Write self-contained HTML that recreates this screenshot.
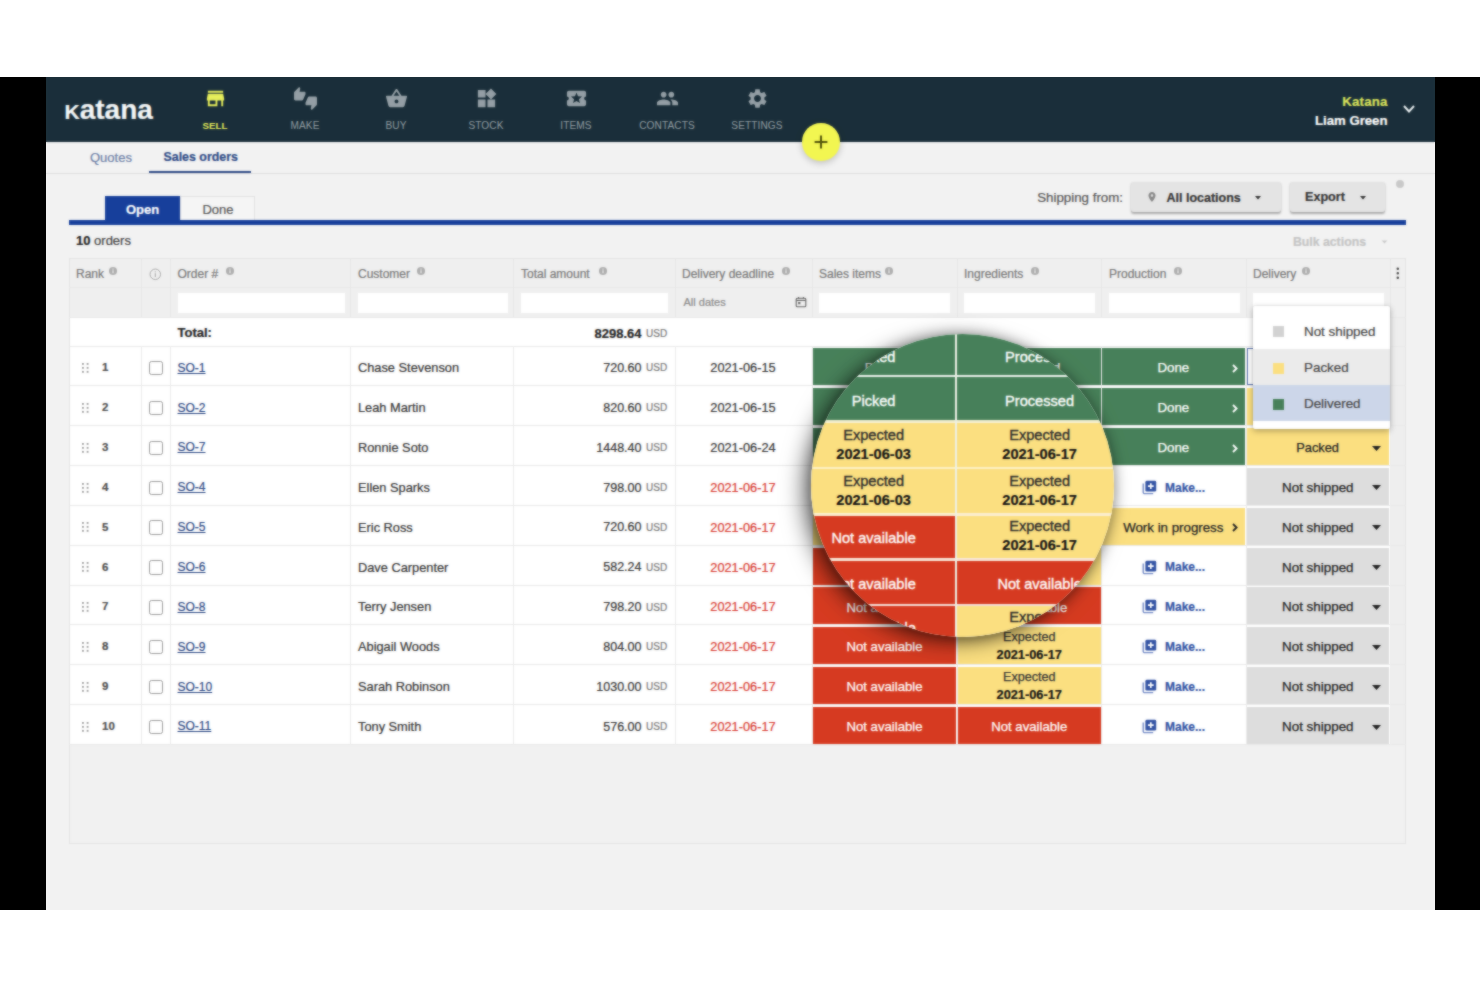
<!DOCTYPE html>
<html lang="en"><head><meta charset="utf-8"><title>Katana - Sales orders</title>
<style>
*{box-sizing:border-box;margin:0;padding:0}
html,body{width:1480px;height:987px;overflow:hidden;background:#fff}
body{font-family:"Liberation Sans",sans-serif;font-size:13px;color:#333;position:relative}
.abs{position:absolute}
#black{position:absolute;left:0;top:77px;width:1480px;height:833px;background:#000}
#app{position:absolute;left:46px;top:77px;width:1389px;height:833px;background:#f2f2f2;overflow:hidden}
#in{position:absolute;left:-46px;top:-77px;width:1480px;height:987px}
#nav{position:absolute;left:46px;top:77px;width:1389px;height:65px;background:#1b2f3a}
.t{position:absolute;white-space:nowrap;line-height:1;-webkit-text-stroke-width:0.2px}
.navlbl{position:absolute;top:119.5px;font-size:10.1px;color:#949fa5;text-align:center;width:80px;line-height:12px;letter-spacing:0.1px}
.navico{position:absolute;top:88px;width:22px;height:22px}
.hl{position:absolute;height:1px;background:#e9e9e9}
.vl{position:absolute;width:1px;background:#ebebeb}
</style></head>
<body>
<div id="black"></div><div id="app"><div id="in">
<div id="nav"></div>
<div class="t" id="logo" style="left:64.5px;top:93.4px;font-size:28px;line-height:32px;color:#f4f7f8;font-weight:bold;letter-spacing:0px"><span style="font-variant:small-caps;font-size:1.06em">k</span>atana</div>
<div class="navlbl" style="left:175px;color:#e6ee5b;font-weight:bold;font-size:9.6px">SELL</div>
<div class="navlbl" style="left:265px;color:#949fa5;font-weight:normal">MAKE</div>
<div class="navlbl" style="left:356px;color:#949fa5;font-weight:normal">BUY</div>
<div class="navlbl" style="left:446px;color:#949fa5;font-weight:normal">STOCK</div>
<div class="navlbl" style="left:536px;color:#949fa5;font-weight:normal">ITEMS</div>
<div class="navlbl" style="left:627px;color:#949fa5;font-weight:normal">CONTACTS</div>
<div class="navlbl" style="left:717px;color:#949fa5;font-weight:normal">SETTINGS</div>
<div class="t" style="top:93.6px;font-size:13.2px;line-height:15.8px;color:#dde55c;font-weight:bold;letter-spacing:0.2px;right:92.5px;">Katana</div>
<div class="t" style="top:112.6px;font-size:13.2px;line-height:15.8px;color:#fff;font-weight:bold;right:92.5px;">Liam Green</div>
<svg class="abs" style="left:1402px;top:104.3px" width="14" height="10" viewBox="0 0 14 10"><path d="M2 2 L7 7.5 L12 2" fill="none" stroke="#e8eef0" stroke-width="2"/></svg>
<svg class="abs" style="left:203.8px;top:86.9px" width="23" height="23" viewBox="0 0 24 24"><path d="M20 4H4v2h16V4zm1 10v-2l-1-5H4l-1 5v2h1v6h10v-6h4v6h2v-6h1zm-9 4H6v-4h6v4z" fill="#e6ee5b"/></svg>
<svg class="abs" style="left:293.8px;top:86.9px" width="23" height="23" viewBox="0 0 24 24"><path d="M12 6c0-.55-.45-1-1-1H5.82l.66-3.18.02-.23c0-.31-.13-.59-.33-.8L5.38 0 .44 4.94C.17 5.21 0 5.59 0 6v6.5c0 .83.67 1.5 1.5 1.5h6.75c.62 0 1.15-.38 1.38-.91l2.26-5.29c.07-.17.11-.36.11-.55V6zm10.5 4h-6.75c-.62 0-1.15.38-1.38.91l-2.26 5.29c-.07.17-.11.36-.11.55V18c0 .55.45 1 1 1h5.18l-.66 3.18-.02.24c0 .31.13.59.33.8l.79.78 4.94-4.94c.27-.27.44-.65.44-1.06v-6.5c0-.83-.67-1.5-1.5-1.5z" fill="#949fa5"/></svg>
<svg class="abs" style="left:384.8px;top:86.9px" width="23" height="23" viewBox="0 0 24 24"><path d="M17.21 9l-4.38-6.56c-.19-.28-.51-.42-.83-.42-.32 0-.64.14-.83.43L6.79 9H2c-.55 0-1 .45-1 1 0 .09.01.18.04.27l2.54 9.27c.23.84 1 1.46 1.92 1.46h13c.92 0 1.69-.62 1.93-1.46l2.54-9.27L23 10c0-.55-.45-1-1-1h-4.79zM9 9l3-4.4L15 9H9zm3 8c-1.1 0-2-.9-2-2s.9-2 2-2 2 .9 2 2-.9 2-2 2z" fill="#949fa5"/></svg>
<svg class="abs" style="left:474.8px;top:86.9px" width="23" height="23" viewBox="0 0 24 24"><path d="M13 13v8h8v-8h-8zM3 21h8v-8H3v8zM3 3v8h8V3H3zm13.66-1.31L11 7.34 16.66 13l5.66-5.66-5.66-5.65z" fill="#949fa5"/></svg>
<svg class="abs" style="left:564.8px;top:86.9px" width="23" height="23" viewBox="0 0 24 24"><path d="M20 12c0-1.1.9-2 2-2V6c0-1.1-.9-2-2-2H4c-1.1 0-1.99.9-1.99 2v4c1.1 0 1.99.9 1.99 2s-.89 2-2 2v4c0 1.1.9 2 2 2h16c1.1 0 2-.9 2-2v-4c-1.1 0-2-.9-2-2zm-4.42 4.8L12 14.5l-3.58 2.3 1.08-4.12-3.29-2.69 4.24-.25L12 5.8l1.54 3.95 4.24.25-3.29 2.69 1.09 4.11z" fill="#949fa5"/></svg>
<svg class="abs" style="left:655.8px;top:86.9px" width="23" height="23" viewBox="0 0 24 24"><path d="M16 11c1.66 0 2.99-1.34 2.99-3S17.66 5 16 5c-1.66 0-3 1.34-3 3s1.34 3 3 3zm-8 0c1.66 0 2.99-1.34 2.99-3S9.66 5 8 5C6.34 5 5 6.34 5 8s1.34 3 3 3zm0 2c-2.33 0-7 1.17-7 3.5V19h14v-2.5c0-2.33-4.67-3.5-7-3.5zm8 0c-.29 0-.62.02-.97.05 1.16.84 1.97 1.97 1.97 3.45V19h6v-2.5c0-2.33-4.67-3.5-7-3.5z" fill="#949fa5"/></svg>
<svg class="abs" style="left:745.8px;top:86.9px" width="23" height="23" viewBox="0 0 24 24"><path d="M19.14 12.94c.04-.3.06-.61.06-.94 0-.32-.02-.64-.07-.94l2.03-1.58c.18-.14.23-.41.12-.61l-1.92-3.32c-.12-.22-.37-.29-.59-.22l-2.39.96c-.5-.38-1.03-.7-1.62-.94l-.36-2.54c-.04-.24-.24-.41-.48-.41h-3.84c-.24 0-.43.17-.47.41l-.36 2.54c-.59.24-1.13.57-1.62.94l-2.39-.96c-.22-.08-.47 0-.59.22L2.74 8.87c-.12.21-.08.47.12.61l2.03 1.58c-.05.3-.09.63-.09.94s.02.64.07.94l-2.03 1.58c-.18.14-.23.41-.12.61l1.92 3.32c.12.22.37.29.59.22l2.39-.96c.5.38 1.03.7 1.62.94l.36 2.54c.05.24.24.41.48.41h3.84c.24 0 .44-.17.47-.41l.36-2.54c.59-.24 1.13-.56 1.62-.94l2.39.96c.22.08.47 0 .59-.22l1.92-3.32c.12-.22.07-.47-.12-.61l-2.01-1.58zM12 15.6c-1.98 0-3.6-1.62-3.6-3.6s1.62-3.6 3.6-3.6 3.6 1.62 3.6 3.6-1.62 3.6-3.6 3.6z" fill="#949fa5"/></svg>
<div class="hl" style="left:46px;top:173px;width:1389px;background:#dedede"></div>
<div class="t" style="top:149.7px;font-size:13px;line-height:15.6px;color:#6d7fa6;left:90px;">Quotes</div>
<div class="t" style="top:150.1px;font-size:12.4px;line-height:14.9px;color:#2d4a86;font-weight:bold;left:163.5px;">Sales orders</div>
<div class="abs" style="left:149px;top:171.3px;width:102px;height:1.7px;background:#2d4a86"></div>
<div class="abs" style="left:802.3px;top:123.2px;width:37.4px;height:37.4px;border-radius:50%;background:#f2f652;box-shadow:0 2px 7px rgba(0,0,0,.22)"></div>
<svg class="abs" style="left:813px;top:134px" width="16" height="16" viewBox="0 0 16 16"><path d="M8 1.600v12.800M1.600 8h12.800" stroke="#4f5008" stroke-width="2" fill="none"/></svg>
<div class="abs" style="left:180px;top:196px;width:75px;height:24px;background:#f5f5f5;border:1px solid #e2e2e2;border-bottom:none"></div>
<div class="abs" style="left:105px;top:195.5px;width:75px;height:25px;background:#17409b"></div>
<div class="abs" style="left:69px;top:219.7px;width:1337px;height:5.4px;background:#17409b"></div>
<div class="t" style="top:201.9px;font-size:13px;line-height:15.6px;color:#fff;font-weight:bold;left:-57.5px;width:400px;text-align:center;">Open</div>
<div class="t" style="top:201.9px;font-size:13px;line-height:15.6px;color:#555;left:18px;width:400px;text-align:center;">Done</div>
<div class="t" style="top:189.5px;font-size:13.3px;line-height:16.0px;color:#555;right:357px;">Shipping from:</div>
<div class="abs" style="left:1131px;top:182px;width:150px;height:30px;background:#e4e4e4;border-radius:3px;box-shadow:0 1.5px 2px rgba(0,0,0,.3)"></div>
<div class="t" style="top:190.5px;font-size:12.5px;line-height:15.0px;color:#333;font-weight:bold;left:1166.5px;">All locations</div>
<div class="abs" style="left:1290px;top:182px;width:95px;height:30px;background:#e4e4e4;border-radius:3px;box-shadow:0 1.5px 2px rgba(0,0,0,.3)"></div>
<div class="t" style="top:190.4px;font-size:12.6px;line-height:15.1px;color:#333;font-weight:bold;left:1305px;">Export</div>
<svg class="abs" style="left:1146px;top:191px" width="12" height="12" viewBox="0 0 24 24"><path d="M12 2C8.13 2 5 5.13 5 9c0 5.25 7 13 7 13s7-7.75 7-13c0-3.87-3.13-7-7-7zm0 9.500c-1.38 0-2.5-1.12-2.5-2.5s1.120-2.5 2.5-2.5 2.5 1.120 2.5 2.5-1.120 2.500-2.5 2.500z" fill="#888"/></svg>
<svg class="abs" style="left:1255px;top:196.3px" width="6" height="3.5" viewBox="0 0 7 4"><path d="M0 0h7L3.5 4z" fill="#333"/></svg>
<svg class="abs" style="left:1359.5px;top:196.3px" width="6" height="3.5" viewBox="0 0 7 4"><path d="M0 0h7L3.5 4z" fill="#333"/></svg>
<div class="abs" style="left:1396px;top:180px;width:8px;height:8px;border-radius:50%;background:#c9c9c9"></div>
<div class="t" style="top:233.2px;font-size:13px;line-height:15.6px;color:#444;left:76px;"><b style="color:#222">10</b> orders</div>
<div class="t" style="top:234.6px;font-size:12.3px;line-height:14.8px;color:#c4c4c4;font-weight:bold;right:114px;">Bulk actions</div>
<svg class="abs" style="left:1380.5px;top:239.5px" width="7" height="4" viewBox="0 0 8 5"><path d="M0.5 0.5h7L4 4.5z" fill="#c9c9c9"/></svg>
<div class="abs" style="left:69px;top:258.4px;width:1336.9px;height:585.2px;border:1px solid #e3e3e3;background:#f1f1f1"></div>
<div class="abs" style="left:70px;top:259.4px;width:1334.9px;height:57.60000000000002px;background:#efefef"></div>
<div class="abs" style="left:70px;top:317px;width:1334.9px;height:427.5px;background:#fff"></div>
<div class="abs" style="left:1390px;top:317px;width:15px;height:427.5px;background:#eeeeee"></div>
<div class="hl" style="left:69px;top:287.3px;width:1336.9px"></div>
<div class="hl" style="left:69px;top:316.5px;width:1336.9px"></div>
<div class="hl" style="left:69px;top:345.5px;width:1336.9px"></div>
<div class="hl" style="left:69px;top:385.35px;width:1336.9px"></div>
<div class="hl" style="left:69px;top:425.2px;width:1336.9px"></div>
<div class="hl" style="left:69px;top:465.05px;width:1336.9px"></div>
<div class="hl" style="left:69px;top:504.9px;width:1336.9px"></div>
<div class="hl" style="left:69px;top:544.75px;width:1336.9px"></div>
<div class="hl" style="left:69px;top:584.6px;width:1336.9px"></div>
<div class="hl" style="left:69px;top:624.45px;width:1336.9px"></div>
<div class="hl" style="left:69px;top:664.3px;width:1336.9px"></div>
<div class="hl" style="left:69px;top:704.1500000000001px;width:1336.9px"></div>
<div class="hl" style="left:69px;top:744.0px;width:1336.9px"></div>
<div class="vl" style="left:140.5px;top:258.4px;height:58.60000000000002px;background:#e6e6e6"></div>
<div class="vl" style="left:140.5px;top:346px;height:398.5px"></div>
<div class="vl" style="left:169.5px;top:258.4px;height:58.60000000000002px;background:#e6e6e6"></div>
<div class="vl" style="left:169.5px;top:346px;height:398.5px"></div>
<div class="vl" style="left:349.5px;top:258.4px;height:58.60000000000002px;background:#e6e6e6"></div>
<div class="vl" style="left:349.5px;top:346px;height:398.5px"></div>
<div class="vl" style="left:512.5px;top:258.4px;height:58.60000000000002px;background:#e6e6e6"></div>
<div class="vl" style="left:512.5px;top:346px;height:398.5px"></div>
<div class="vl" style="left:674.5px;top:258.4px;height:58.60000000000002px;background:#e6e6e6"></div>
<div class="vl" style="left:674.5px;top:346px;height:398.5px"></div>
<div class="vl" style="left:811.5px;top:258.4px;height:58.60000000000002px;background:#e6e6e6"></div>
<div class="vl" style="left:811.5px;top:346px;height:398.5px"></div>
<div class="vl" style="left:956.5px;top:258.4px;height:58.60000000000002px;background:#e6e6e6"></div>
<div class="vl" style="left:956.5px;top:346px;height:398.5px"></div>
<div class="vl" style="left:1101.0px;top:258.4px;height:58.60000000000002px;background:#e6e6e6"></div>
<div class="vl" style="left:1101.0px;top:346px;height:398.5px"></div>
<div class="vl" style="left:1245.5px;top:258.4px;height:58.60000000000002px;background:#e6e6e6"></div>
<div class="vl" style="left:1245.5px;top:346px;height:398.5px"></div>
<div class="vl" style="left:1389.5px;top:258.4px;height:58.60000000000002px;background:#e6e6e6"></div>
<div class="vl" style="left:1389.5px;top:346px;height:398.5px"></div>
<div class="t" style="top:267.1px;font-size:12px;line-height:14.4px;color:#787878;left:76px;">Rank</div>
<svg class="abs" style="left:108.5px;top:267px" width="8" height="8" viewBox="0 0 8 8"><circle cx="4" cy="4" r="4" fill="#adadad"/><rect x="3.4" y="3.3" width="1.2" height="2.9" fill="#efefef"/><rect x="3.4" y="1.6" width="1.2" height="1.1" fill="#efefef"/></svg>
<div class="t" style="top:267.1px;font-size:12px;line-height:14.4px;color:#787878;left:177.5px;">Order #</div>
<svg class="abs" style="left:225.5px;top:267px" width="8" height="8" viewBox="0 0 8 8"><circle cx="4" cy="4" r="4" fill="#adadad"/><rect x="3.4" y="3.3" width="1.2" height="2.9" fill="#efefef"/><rect x="3.4" y="1.6" width="1.2" height="1.1" fill="#efefef"/></svg>
<div class="t" style="top:267.1px;font-size:12px;line-height:14.4px;color:#787878;left:358px;">Customer</div>
<svg class="abs" style="left:417px;top:267px" width="8" height="8" viewBox="0 0 8 8"><circle cx="4" cy="4" r="4" fill="#adadad"/><rect x="3.4" y="3.3" width="1.2" height="2.9" fill="#efefef"/><rect x="3.4" y="1.6" width="1.2" height="1.1" fill="#efefef"/></svg>
<div class="t" style="top:267.1px;font-size:12px;line-height:14.4px;color:#787878;left:521px;">Total amount</div>
<svg class="abs" style="left:599px;top:267px" width="8" height="8" viewBox="0 0 8 8"><circle cx="4" cy="4" r="4" fill="#adadad"/><rect x="3.4" y="3.3" width="1.2" height="2.9" fill="#efefef"/><rect x="3.4" y="1.6" width="1.2" height="1.1" fill="#efefef"/></svg>
<div class="t" style="top:267.1px;font-size:12px;line-height:14.4px;color:#787878;left:682px;">Delivery deadline</div>
<svg class="abs" style="left:781.5px;top:267px" width="8" height="8" viewBox="0 0 8 8"><circle cx="4" cy="4" r="4" fill="#adadad"/><rect x="3.4" y="3.3" width="1.2" height="2.9" fill="#efefef"/><rect x="3.4" y="1.6" width="1.2" height="1.1" fill="#efefef"/></svg>
<div class="t" style="top:267.1px;font-size:12px;line-height:14.4px;color:#787878;left:819px;">Sales items</div>
<svg class="abs" style="left:885px;top:267px" width="8" height="8" viewBox="0 0 8 8"><circle cx="4" cy="4" r="4" fill="#adadad"/><rect x="3.4" y="3.3" width="1.2" height="2.9" fill="#efefef"/><rect x="3.4" y="1.6" width="1.2" height="1.1" fill="#efefef"/></svg>
<div class="t" style="top:267.1px;font-size:12px;line-height:14.4px;color:#787878;left:964px;">Ingredients</div>
<svg class="abs" style="left:1030.5px;top:267px" width="8" height="8" viewBox="0 0 8 8"><circle cx="4" cy="4" r="4" fill="#adadad"/><rect x="3.4" y="3.3" width="1.2" height="2.9" fill="#efefef"/><rect x="3.4" y="1.6" width="1.2" height="1.1" fill="#efefef"/></svg>
<div class="t" style="top:267.1px;font-size:12px;line-height:14.4px;color:#787878;left:1109px;">Production</div>
<svg class="abs" style="left:1174px;top:267px" width="8" height="8" viewBox="0 0 8 8"><circle cx="4" cy="4" r="4" fill="#adadad"/><rect x="3.4" y="3.3" width="1.2" height="2.9" fill="#efefef"/><rect x="3.4" y="1.6" width="1.2" height="1.1" fill="#efefef"/></svg>
<div class="t" style="top:267.1px;font-size:12px;line-height:14.4px;color:#787878;left:1253px;">Delivery</div>
<svg class="abs" style="left:1302px;top:267px" width="8" height="8" viewBox="0 0 8 8"><circle cx="4" cy="4" r="4" fill="#adadad"/><rect x="3.4" y="3.3" width="1.2" height="2.9" fill="#efefef"/><rect x="3.4" y="1.6" width="1.2" height="1.1" fill="#efefef"/></svg>
<svg class="abs" style="left:149.3px;top:268.3px" width="12.600" height="12.600" viewBox="0 0 12 12"><circle cx="6" cy="6" r="5" fill="none" stroke="#a5a5a5" stroke-width="0.9"/><rect x="5.5" y="5" width="1" height="3.6" fill="#a5a5a5"/><rect x="5.5" y="3.2" width="1" height="1" fill="#a5a5a5"/></svg>
<svg class="abs" style="left:1395.5px;top:267px" width="3.6" height="12.6" viewBox="0 0 4 14"><circle cx="2" cy="2" r="1.4" fill="#444"/><circle cx="2" cy="7" r="1.4" fill="#444"/><circle cx="2" cy="12" r="1.4" fill="#444"/></svg>
<div class="abs" style="left:177.5px;top:293px;width:167.5px;height:19.5px;background:#fff"></div>
<div class="abs" style="left:358px;top:293px;width:150px;height:19.5px;background:#fff"></div>
<div class="abs" style="left:521px;top:293px;width:147px;height:19.5px;background:#fff"></div>
<div class="abs" style="left:819px;top:293px;width:131px;height:19.5px;background:#fff"></div>
<div class="abs" style="left:964px;top:293px;width:131px;height:19.5px;background:#fff"></div>
<div class="abs" style="left:1109px;top:293px;width:131px;height:19.5px;background:#fff"></div>
<div class="abs" style="left:1253px;top:293px;width:131px;height:19.5px;background:#fff"></div>
<div class="t" style="top:295.7px;font-size:11px;line-height:13.2px;color:#8a8a8a;left:683.5px;">All dates</div>
<svg class="abs" style="left:795px;top:296px" width="12" height="12" viewBox="0 0 12 12"><rect x="1.2" y="2.2" width="9.6" height="8.6" rx="1" fill="none" stroke="#666" stroke-width="1.1"/><path d="M1.2 4.4h9.6" stroke="#666" stroke-width="1.1"/><rect x="3.2" y="6" width="2.2" height="2.2" fill="#666"/><path d="M3.6 1v1.6M8.4 1v1.6" stroke="#666" stroke-width="1.1"/></svg>
<div class="t" style="top:325.4px;font-size:13px;line-height:15.6px;color:#222;font-weight:bold;left:177.5px;">Total:</div>
<div class="t" style="top:325.7px;font-size:13px;line-height:15.6px;color:#222;font-weight:bold;right:838.5px;">8298.64</div>
<div class="t" style="top:327.8px;font-size:10px;line-height:12.0px;color:#777;left:646px;">USD</div>
<svg class="abs" style="left:82px;top:362.9px" width="7" height="10" viewBox="0 0 6 8.6"><rect x="0" y="0" width="1.6" height="1.6" fill="#9b9b9b"/><rect x="0" y="3.4" width="1.6" height="1.6" fill="#9b9b9b"/><rect x="0" y="6.8" width="1.6" height="1.6" fill="#9b9b9b"/><rect x="4" y="0" width="1.6" height="1.6" fill="#9b9b9b"/><rect x="4" y="3.4" width="1.6" height="1.6" fill="#9b9b9b"/><rect x="4" y="6.8" width="1.6" height="1.6" fill="#9b9b9b"/></svg>
<div class="t" style="top:361.3px;font-size:11.5px;line-height:13.8px;color:#4d4d4d;font-weight:bold;left:102px;">1</div>
<div class="abs" style="left:148.5px;top:360.9px;width:14.5px;height:14.5px;border:1.5px solid #999;border-radius:2.5px;background:#fff"></div>
<div class="t" style="top:360.7px;font-size:12px;line-height:14.4px;color:#2a4682;left:177.5px;"><span style="text-decoration:underline">SO-1</span></div>
<div class="t" style="top:360.2px;font-size:12.8px;line-height:15.4px;color:#333;left:358px;">Chase Stevenson</div>
<div class="t" style="top:360.9px;font-size:12.5px;line-height:15.0px;color:#333;right:838.5px;">720.60</div>
<div class="t" style="top:362.4px;font-size:10px;line-height:12.0px;color:#777;left:646px;">USD</div>
<div class="t" style="top:360.2px;font-size:12.8px;line-height:15.4px;color:#333;left:543px;width:400px;text-align:center;">2021-06-15</div>
<svg class="abs" style="left:82px;top:402.8px" width="7" height="10" viewBox="0 0 6 8.6"><rect x="0" y="0" width="1.6" height="1.6" fill="#9b9b9b"/><rect x="0" y="3.4" width="1.6" height="1.6" fill="#9b9b9b"/><rect x="0" y="6.8" width="1.6" height="1.6" fill="#9b9b9b"/><rect x="4" y="0" width="1.6" height="1.6" fill="#9b9b9b"/><rect x="4" y="3.4" width="1.6" height="1.6" fill="#9b9b9b"/><rect x="4" y="6.8" width="1.6" height="1.6" fill="#9b9b9b"/></svg>
<div class="t" style="top:401.2px;font-size:11.5px;line-height:13.8px;color:#4d4d4d;font-weight:bold;left:102px;">2</div>
<div class="abs" style="left:148.5px;top:400.8px;width:14.5px;height:14.5px;border:1.5px solid #999;border-radius:2.5px;background:#fff"></div>
<div class="t" style="top:400.6px;font-size:12px;line-height:14.4px;color:#2a4682;left:177.5px;"><span style="text-decoration:underline">SO-2</span></div>
<div class="t" style="top:400.1px;font-size:12.8px;line-height:15.4px;color:#333;left:358px;">Leah Martin</div>
<div class="t" style="top:400.8px;font-size:12.5px;line-height:15.0px;color:#333;right:838.5px;">820.60</div>
<div class="t" style="top:402.3px;font-size:10px;line-height:12.0px;color:#777;left:646px;">USD</div>
<div class="t" style="top:400.1px;font-size:12.8px;line-height:15.4px;color:#333;left:543px;width:400px;text-align:center;">2021-06-15</div>
<svg class="abs" style="left:82px;top:442.6px" width="7" height="10" viewBox="0 0 6 8.6"><rect x="0" y="0" width="1.6" height="1.6" fill="#9b9b9b"/><rect x="0" y="3.4" width="1.6" height="1.6" fill="#9b9b9b"/><rect x="0" y="6.8" width="1.6" height="1.6" fill="#9b9b9b"/><rect x="4" y="0" width="1.6" height="1.6" fill="#9b9b9b"/><rect x="4" y="3.4" width="1.6" height="1.6" fill="#9b9b9b"/><rect x="4" y="6.8" width="1.6" height="1.6" fill="#9b9b9b"/></svg>
<div class="t" style="top:441.0px;font-size:11.5px;line-height:13.8px;color:#4d4d4d;font-weight:bold;left:102px;">3</div>
<div class="abs" style="left:148.5px;top:440.6px;width:14.5px;height:14.5px;border:1.5px solid #999;border-radius:2.5px;background:#fff"></div>
<div class="t" style="top:440.4px;font-size:12px;line-height:14.4px;color:#2a4682;left:177.5px;"><span style="text-decoration:underline">SO-7</span></div>
<div class="t" style="top:439.9px;font-size:12.8px;line-height:15.4px;color:#333;left:358px;">Ronnie Soto</div>
<div class="t" style="top:440.6px;font-size:12.5px;line-height:15.0px;color:#333;right:838.5px;">1448.40</div>
<div class="t" style="top:442.1px;font-size:10px;line-height:12.0px;color:#777;left:646px;">USD</div>
<div class="t" style="top:439.9px;font-size:12.8px;line-height:15.4px;color:#333;left:543px;width:400px;text-align:center;">2021-06-24</div>
<svg class="abs" style="left:82px;top:482.5px" width="7" height="10" viewBox="0 0 6 8.6"><rect x="0" y="0" width="1.6" height="1.6" fill="#9b9b9b"/><rect x="0" y="3.4" width="1.6" height="1.6" fill="#9b9b9b"/><rect x="0" y="6.8" width="1.6" height="1.6" fill="#9b9b9b"/><rect x="4" y="0" width="1.6" height="1.6" fill="#9b9b9b"/><rect x="4" y="3.4" width="1.6" height="1.6" fill="#9b9b9b"/><rect x="4" y="6.8" width="1.6" height="1.6" fill="#9b9b9b"/></svg>
<div class="t" style="top:480.9px;font-size:11.5px;line-height:13.8px;color:#4d4d4d;font-weight:bold;left:102px;">4</div>
<div class="abs" style="left:148.5px;top:480.5px;width:14.5px;height:14.5px;border:1.5px solid #999;border-radius:2.5px;background:#fff"></div>
<div class="t" style="top:480.3px;font-size:12px;line-height:14.4px;color:#2a4682;left:177.5px;"><span style="text-decoration:underline">SO-4</span></div>
<div class="t" style="top:479.8px;font-size:12.8px;line-height:15.4px;color:#333;left:358px;">Ellen Sparks</div>
<div class="t" style="top:480.5px;font-size:12.5px;line-height:15.0px;color:#333;right:838.5px;">798.00</div>
<div class="t" style="top:482.0px;font-size:10px;line-height:12.0px;color:#777;left:646px;">USD</div>
<div class="t" style="top:479.8px;font-size:12.8px;line-height:15.4px;color:#d8392f;left:543px;width:400px;text-align:center;">2021-06-17</div>
<svg class="abs" style="left:82px;top:522.3px" width="7" height="10" viewBox="0 0 6 8.6"><rect x="0" y="0" width="1.6" height="1.6" fill="#9b9b9b"/><rect x="0" y="3.4" width="1.6" height="1.6" fill="#9b9b9b"/><rect x="0" y="6.8" width="1.6" height="1.6" fill="#9b9b9b"/><rect x="4" y="0" width="1.6" height="1.6" fill="#9b9b9b"/><rect x="4" y="3.4" width="1.6" height="1.6" fill="#9b9b9b"/><rect x="4" y="6.8" width="1.6" height="1.6" fill="#9b9b9b"/></svg>
<div class="t" style="top:520.7px;font-size:11.5px;line-height:13.8px;color:#4d4d4d;font-weight:bold;left:102px;">5</div>
<div class="abs" style="left:148.5px;top:520.3px;width:14.5px;height:14.5px;border:1.5px solid #999;border-radius:2.5px;background:#fff"></div>
<div class="t" style="top:520.1px;font-size:12px;line-height:14.4px;color:#2a4682;left:177.5px;"><span style="text-decoration:underline">SO-5</span></div>
<div class="t" style="top:519.6px;font-size:12.8px;line-height:15.4px;color:#333;left:358px;">Eric Ross</div>
<div class="t" style="top:520.3px;font-size:12.5px;line-height:15.0px;color:#333;right:838.5px;">720.60</div>
<div class="t" style="top:521.8px;font-size:10px;line-height:12.0px;color:#777;left:646px;">USD</div>
<div class="t" style="top:519.6px;font-size:12.8px;line-height:15.4px;color:#d8392f;left:543px;width:400px;text-align:center;">2021-06-17</div>
<svg class="abs" style="left:82px;top:562.2px" width="7" height="10" viewBox="0 0 6 8.6"><rect x="0" y="0" width="1.6" height="1.6" fill="#9b9b9b"/><rect x="0" y="3.4" width="1.6" height="1.6" fill="#9b9b9b"/><rect x="0" y="6.8" width="1.6" height="1.6" fill="#9b9b9b"/><rect x="4" y="0" width="1.6" height="1.6" fill="#9b9b9b"/><rect x="4" y="3.4" width="1.6" height="1.6" fill="#9b9b9b"/><rect x="4" y="6.8" width="1.6" height="1.6" fill="#9b9b9b"/></svg>
<div class="t" style="top:560.6px;font-size:11.5px;line-height:13.8px;color:#4d4d4d;font-weight:bold;left:102px;">6</div>
<div class="abs" style="left:148.5px;top:560.2px;width:14.5px;height:14.5px;border:1.5px solid #999;border-radius:2.5px;background:#fff"></div>
<div class="t" style="top:560.0px;font-size:12px;line-height:14.4px;color:#2a4682;left:177.5px;"><span style="text-decoration:underline">SO-6</span></div>
<div class="t" style="top:559.5px;font-size:12.8px;line-height:15.4px;color:#333;left:358px;">Dave Carpenter</div>
<div class="t" style="top:560.2px;font-size:12.5px;line-height:15.0px;color:#333;right:838.5px;">582.24</div>
<div class="t" style="top:561.7px;font-size:10px;line-height:12.0px;color:#777;left:646px;">USD</div>
<div class="t" style="top:559.5px;font-size:12.8px;line-height:15.4px;color:#d8392f;left:543px;width:400px;text-align:center;">2021-06-17</div>
<svg class="abs" style="left:82px;top:602.0px" width="7" height="10" viewBox="0 0 6 8.6"><rect x="0" y="0" width="1.6" height="1.6" fill="#9b9b9b"/><rect x="0" y="3.4" width="1.6" height="1.6" fill="#9b9b9b"/><rect x="0" y="6.8" width="1.6" height="1.6" fill="#9b9b9b"/><rect x="4" y="0" width="1.6" height="1.6" fill="#9b9b9b"/><rect x="4" y="3.4" width="1.6" height="1.6" fill="#9b9b9b"/><rect x="4" y="6.8" width="1.6" height="1.6" fill="#9b9b9b"/></svg>
<div class="t" style="top:600.4px;font-size:11.5px;line-height:13.8px;color:#4d4d4d;font-weight:bold;left:102px;">7</div>
<div class="abs" style="left:148.5px;top:600.0px;width:14.5px;height:14.5px;border:1.5px solid #999;border-radius:2.5px;background:#fff"></div>
<div class="t" style="top:599.8px;font-size:12px;line-height:14.4px;color:#2a4682;left:177.5px;"><span style="text-decoration:underline">SO-8</span></div>
<div class="t" style="top:599.3px;font-size:12.8px;line-height:15.4px;color:#333;left:358px;">Terry Jensen</div>
<div class="t" style="top:600.0px;font-size:12.5px;line-height:15.0px;color:#333;right:838.5px;">798.20</div>
<div class="t" style="top:601.5px;font-size:10px;line-height:12.0px;color:#777;left:646px;">USD</div>
<div class="t" style="top:599.3px;font-size:12.8px;line-height:15.4px;color:#d8392f;left:543px;width:400px;text-align:center;">2021-06-17</div>
<svg class="abs" style="left:82px;top:641.9px" width="7" height="10" viewBox="0 0 6 8.6"><rect x="0" y="0" width="1.6" height="1.6" fill="#9b9b9b"/><rect x="0" y="3.4" width="1.6" height="1.6" fill="#9b9b9b"/><rect x="0" y="6.8" width="1.6" height="1.6" fill="#9b9b9b"/><rect x="4" y="0" width="1.6" height="1.6" fill="#9b9b9b"/><rect x="4" y="3.4" width="1.6" height="1.6" fill="#9b9b9b"/><rect x="4" y="6.8" width="1.6" height="1.6" fill="#9b9b9b"/></svg>
<div class="t" style="top:640.3px;font-size:11.5px;line-height:13.8px;color:#4d4d4d;font-weight:bold;left:102px;">8</div>
<div class="abs" style="left:148.5px;top:639.9px;width:14.5px;height:14.5px;border:1.5px solid #999;border-radius:2.5px;background:#fff"></div>
<div class="t" style="top:639.7px;font-size:12px;line-height:14.4px;color:#2a4682;left:177.5px;"><span style="text-decoration:underline">SO-9</span></div>
<div class="t" style="top:639.2px;font-size:12.8px;line-height:15.4px;color:#333;left:358px;">Abigail Woods</div>
<div class="t" style="top:639.9px;font-size:12.5px;line-height:15.0px;color:#333;right:838.5px;">804.00</div>
<div class="t" style="top:641.4px;font-size:10px;line-height:12.0px;color:#777;left:646px;">USD</div>
<div class="t" style="top:639.2px;font-size:12.8px;line-height:15.4px;color:#d8392f;left:543px;width:400px;text-align:center;">2021-06-17</div>
<svg class="abs" style="left:82px;top:681.7px" width="7" height="10" viewBox="0 0 6 8.6"><rect x="0" y="0" width="1.6" height="1.6" fill="#9b9b9b"/><rect x="0" y="3.4" width="1.6" height="1.6" fill="#9b9b9b"/><rect x="0" y="6.8" width="1.6" height="1.6" fill="#9b9b9b"/><rect x="4" y="0" width="1.6" height="1.6" fill="#9b9b9b"/><rect x="4" y="3.4" width="1.6" height="1.6" fill="#9b9b9b"/><rect x="4" y="6.8" width="1.6" height="1.6" fill="#9b9b9b"/></svg>
<div class="t" style="top:680.1px;font-size:11.5px;line-height:13.8px;color:#4d4d4d;font-weight:bold;left:102px;">9</div>
<div class="abs" style="left:148.5px;top:679.7px;width:14.5px;height:14.5px;border:1.5px solid #999;border-radius:2.5px;background:#fff"></div>
<div class="t" style="top:679.5px;font-size:12px;line-height:14.4px;color:#2a4682;left:177.5px;"><span style="text-decoration:underline">SO-10</span></div>
<div class="t" style="top:679.0px;font-size:12.8px;line-height:15.4px;color:#333;left:358px;">Sarah Robinson</div>
<div class="t" style="top:679.7px;font-size:12.5px;line-height:15.0px;color:#333;right:838.5px;">1030.00</div>
<div class="t" style="top:681.2px;font-size:10px;line-height:12.0px;color:#777;left:646px;">USD</div>
<div class="t" style="top:679.0px;font-size:12.8px;line-height:15.4px;color:#d8392f;left:543px;width:400px;text-align:center;">2021-06-17</div>
<svg class="abs" style="left:82px;top:721.6px" width="7" height="10" viewBox="0 0 6 8.6"><rect x="0" y="0" width="1.6" height="1.6" fill="#9b9b9b"/><rect x="0" y="3.4" width="1.6" height="1.6" fill="#9b9b9b"/><rect x="0" y="6.8" width="1.6" height="1.6" fill="#9b9b9b"/><rect x="4" y="0" width="1.6" height="1.6" fill="#9b9b9b"/><rect x="4" y="3.4" width="1.6" height="1.6" fill="#9b9b9b"/><rect x="4" y="6.8" width="1.6" height="1.6" fill="#9b9b9b"/></svg>
<div class="t" style="top:720.0px;font-size:11.5px;line-height:13.8px;color:#4d4d4d;font-weight:bold;left:102px;">10</div>
<div class="abs" style="left:148.5px;top:719.6px;width:14.5px;height:14.5px;border:1.5px solid #999;border-radius:2.5px;background:#fff"></div>
<div class="t" style="top:719.4px;font-size:12px;line-height:14.4px;color:#2a4682;left:177.5px;"><span style="text-decoration:underline">SO-11</span></div>
<div class="t" style="top:718.9px;font-size:12.8px;line-height:15.4px;color:#333;left:358px;">Tony Smith</div>
<div class="t" style="top:719.6px;font-size:12.5px;line-height:15.0px;color:#333;right:838.5px;">576.00</div>
<div class="t" style="top:721.1px;font-size:10px;line-height:12.0px;color:#777;left:646px;">USD</div>
<div class="t" style="top:718.9px;font-size:12.8px;line-height:15.4px;color:#d8392f;left:543px;width:400px;text-align:center;">2021-06-17</div>
<div class="abs" style="left:812.8px;top:348.30px;width:143.4000000000001px;height:37px;background:#48815a;"></div>
<div class="t" style="top:360.4px;font-size:13.2px;line-height:15.8px;color:#fff;left:684.5px;width:400px;text-align:center;-webkit-text-stroke:0.25px #fff;">Picked</div>
<div class="abs" style="left:957.8px;top:348.30px;width:142.9000000000001px;height:37px;background:#48815a;"></div>
<div class="t" style="top:360.4px;font-size:13.2px;line-height:15.8px;color:#fff;left:829.25px;width:400px;text-align:center;-webkit-text-stroke:0.25px #fff;">Processed</div>
<div class="abs" style="left:812.8px;top:388.15px;width:143.4000000000001px;height:37px;background:#48815a;"></div>
<div class="t" style="top:400.3px;font-size:13.2px;line-height:15.8px;color:#fff;left:684.5px;width:400px;text-align:center;-webkit-text-stroke:0.25px #fff;">Picked</div>
<div class="abs" style="left:957.8px;top:388.15px;width:142.9000000000001px;height:37px;background:#48815a;"></div>
<div class="t" style="top:400.3px;font-size:13.2px;line-height:15.8px;color:#fff;left:829.25px;width:400px;text-align:center;-webkit-text-stroke:0.25px #fff;">Processed</div>
<div class="abs" style="left:812.8px;top:428.00px;width:143.4000000000001px;height:37px;background:#48815a;"></div>
<div class="t" style="top:440.1px;font-size:13.2px;line-height:15.8px;color:#fff;left:684.5px;width:400px;text-align:center;-webkit-text-stroke:0.25px #fff;">Picked</div>
<div class="abs" style="left:957.8px;top:428.00px;width:142.9000000000001px;height:37px;background:#48815a;"></div>
<div class="t" style="top:440.1px;font-size:13.2px;line-height:15.8px;color:#fff;left:829.25px;width:400px;text-align:center;-webkit-text-stroke:0.25px #fff;">Processed</div>
<div class="abs" style="left:812.8px;top:467.85px;width:143.4000000000001px;height:37px;background:#fbdf80;"></div>
<div class="t" style="top:470.3px;font-size:12.6px;line-height:15.1px;color:#333;left:684.5px;width:400px;text-align:center;-webkit-text-stroke:0.25px #333;">Expected</div>
<div class="t" style="top:487.4px;font-size:12.8px;line-height:15.4px;color:#111;font-weight:bold;left:684.5px;width:400px;text-align:center;">2021-06-03</div>
<div class="abs" style="left:957.8px;top:467.85px;width:142.9000000000001px;height:37px;background:#fbdf80;"></div>
<div class="t" style="top:470.3px;font-size:12.6px;line-height:15.1px;color:#333;left:829.25px;width:400px;text-align:center;-webkit-text-stroke:0.25px #333;">Expected</div>
<div class="t" style="top:487.4px;font-size:12.8px;line-height:15.4px;color:#111;font-weight:bold;left:829.25px;width:400px;text-align:center;">2021-06-17</div>
<div class="abs" style="left:812.8px;top:507.70px;width:143.4000000000001px;height:37px;background:#fbdf80;"></div>
<div class="t" style="top:510.2px;font-size:12.6px;line-height:15.1px;color:#333;left:684.5px;width:400px;text-align:center;-webkit-text-stroke:0.25px #333;">Expected</div>
<div class="t" style="top:527.2px;font-size:12.8px;line-height:15.4px;color:#111;font-weight:bold;left:684.5px;width:400px;text-align:center;">2021-06-03</div>
<div class="abs" style="left:957.8px;top:507.70px;width:142.9000000000001px;height:37px;background:#fbdf80;"></div>
<div class="t" style="top:510.2px;font-size:12.6px;line-height:15.1px;color:#333;left:829.25px;width:400px;text-align:center;-webkit-text-stroke:0.25px #333;">Expected</div>
<div class="t" style="top:527.2px;font-size:12.8px;line-height:15.4px;color:#111;font-weight:bold;left:829.25px;width:400px;text-align:center;">2021-06-17</div>
<div class="abs" style="left:812.8px;top:547.55px;width:143.4000000000001px;height:37px;background:#d63b21;"></div>
<div class="t" style="top:559.7px;font-size:13.2px;line-height:15.8px;color:#fff;left:684.5px;width:400px;text-align:center;-webkit-text-stroke:0.25px #fff;">Not available</div>
<div class="abs" style="left:957.8px;top:547.55px;width:142.9000000000001px;height:37px;background:#fbdf80;"></div>
<div class="t" style="top:550.0px;font-size:12.6px;line-height:15.1px;color:#333;left:829.25px;width:400px;text-align:center;-webkit-text-stroke:0.25px #333;">Expected</div>
<div class="t" style="top:567.1px;font-size:12.8px;line-height:15.4px;color:#111;font-weight:bold;left:829.25px;width:400px;text-align:center;">2021-06-17</div>
<div class="abs" style="left:812.8px;top:587.40px;width:143.4000000000001px;height:37px;background:#d63b21;"></div>
<div class="t" style="top:599.5px;font-size:13.2px;line-height:15.8px;color:#fff;left:684.5px;width:400px;text-align:center;-webkit-text-stroke:0.25px #fff;">Not available</div>
<div class="abs" style="left:957.8px;top:587.40px;width:142.9000000000001px;height:37px;background:#d63b21;"></div>
<div class="t" style="top:599.5px;font-size:13.2px;line-height:15.8px;color:#fff;left:829.25px;width:400px;text-align:center;-webkit-text-stroke:0.25px #fff;">Not available</div>
<div class="abs" style="left:812.8px;top:627.25px;width:143.4000000000001px;height:37px;background:#d63b21;"></div>
<div class="t" style="top:639.4px;font-size:13.2px;line-height:15.8px;color:#fff;left:684.5px;width:400px;text-align:center;-webkit-text-stroke:0.25px #fff;">Not available</div>
<div class="abs" style="left:957.8px;top:627.25px;width:142.9000000000001px;height:37px;background:#fbdf80;"></div>
<div class="t" style="top:629.7px;font-size:12.6px;line-height:15.1px;color:#333;left:829.25px;width:400px;text-align:center;-webkit-text-stroke:0.25px #333;">Expected</div>
<div class="t" style="top:646.8px;font-size:12.8px;line-height:15.4px;color:#111;font-weight:bold;left:829.25px;width:400px;text-align:center;">2021-06-17</div>
<div class="abs" style="left:812.8px;top:667.10px;width:143.4000000000001px;height:37px;background:#d63b21;"></div>
<div class="t" style="top:679.2px;font-size:13.2px;line-height:15.8px;color:#fff;left:684.5px;width:400px;text-align:center;-webkit-text-stroke:0.25px #fff;">Not available</div>
<div class="abs" style="left:957.8px;top:667.10px;width:142.9000000000001px;height:37px;background:#fbdf80;"></div>
<div class="t" style="top:669.6px;font-size:12.6px;line-height:15.1px;color:#333;left:829.25px;width:400px;text-align:center;-webkit-text-stroke:0.25px #333;">Expected</div>
<div class="t" style="top:686.6px;font-size:12.8px;line-height:15.4px;color:#111;font-weight:bold;left:829.25px;width:400px;text-align:center;">2021-06-17</div>
<div class="abs" style="left:812.8px;top:706.95px;width:143.4000000000001px;height:37px;background:#d63b21;"></div>
<div class="t" style="top:719.1px;font-size:13.2px;line-height:15.8px;color:#fff;left:684.5px;width:400px;text-align:center;-webkit-text-stroke:0.25px #fff;">Not available</div>
<div class="abs" style="left:957.8px;top:706.95px;width:142.9000000000001px;height:37px;background:#d63b21;"></div>
<div class="t" style="top:719.1px;font-size:13.2px;line-height:15.8px;color:#fff;left:829.25px;width:400px;text-align:center;-webkit-text-stroke:0.25px #fff;">Not available</div>
<div class="abs" style="left:1102.3px;top:348.30px;width:142.9000000000001px;height:37px;background:#48815a;"></div>
<div class="t" style="top:360.3px;font-size:13.3px;line-height:16.0px;color:#fff;left:973.3px;width:400px;text-align:center;-webkit-text-stroke:0.25px #fff;">Done</div>
<svg class="abs" style="left:1231.5px;top:363.8px" width="6" height="9" viewBox="0 0 6 9"><path d="M1 1l3.6 3.5L1 8" fill="none" stroke="#fff" stroke-width="1.8"/></svg>
<div class="abs" style="left:1102.3px;top:388.15px;width:142.9000000000001px;height:37px;background:#48815a;"></div>
<div class="t" style="top:400.2px;font-size:13.3px;line-height:16.0px;color:#fff;left:973.3px;width:400px;text-align:center;-webkit-text-stroke:0.25px #fff;">Done</div>
<svg class="abs" style="left:1231.5px;top:403.7px" width="6" height="9" viewBox="0 0 6 9"><path d="M1 1l3.6 3.5L1 8" fill="none" stroke="#fff" stroke-width="1.8"/></svg>
<div class="abs" style="left:1102.3px;top:428.00px;width:142.9000000000001px;height:37px;background:#48815a;"></div>
<div class="t" style="top:440.0px;font-size:13.3px;line-height:16.0px;color:#fff;left:973.3px;width:400px;text-align:center;-webkit-text-stroke:0.25px #fff;">Done</div>
<svg class="abs" style="left:1231.5px;top:443.5px" width="6" height="9" viewBox="0 0 6 9"><path d="M1 1l3.6 3.5L1 8" fill="none" stroke="#fff" stroke-width="1.8"/></svg>
<svg class="abs" style="left:1141.5px;top:479.9px" width="15" height="15" viewBox="0 0 15 15"><path d="M1.2 3.6v8.6a1.4 1.4 0 0 0 1.4 1.4h8.6" fill="none" stroke="#7289c6" stroke-width="1.4"/><rect x="3.4" y="0.8" width="10.8" height="10.8" rx="1.4" fill="#3152a3"/><path d="M8.8 3.3v5.8M5.9 6.2h5.8" stroke="#fff" stroke-width="1.7"/></svg>
<div class="t" style="top:480.7px;font-size:12px;line-height:14.4px;color:#3152a3;font-weight:bold;left:1165px;">Make...</div>
<div class="abs" style="left:1102.3px;top:507.70px;width:142.9000000000001px;height:37px;background:#fbdf80;"></div>
<div class="t" style="top:519.7px;font-size:13.3px;line-height:16.0px;color:#222;left:973.3px;width:400px;text-align:center;-webkit-text-stroke:0.25px #222;">Work in progress</div>
<svg class="abs" style="left:1231.5px;top:523.2px" width="6" height="9" viewBox="0 0 6 9"><path d="M1 1l3.6 3.5L1 8" fill="none" stroke="#222" stroke-width="1.8"/></svg>
<svg class="abs" style="left:1141.5px;top:559.6px" width="15" height="15" viewBox="0 0 15 15"><path d="M1.2 3.6v8.6a1.4 1.4 0 0 0 1.4 1.4h8.6" fill="none" stroke="#7289c6" stroke-width="1.4"/><rect x="3.4" y="0.8" width="10.8" height="10.8" rx="1.4" fill="#3152a3"/><path d="M8.8 3.3v5.8M5.9 6.2h5.8" stroke="#fff" stroke-width="1.7"/></svg>
<div class="t" style="top:560.4px;font-size:12px;line-height:14.4px;color:#3152a3;font-weight:bold;left:1165px;">Make...</div>
<svg class="abs" style="left:1141.5px;top:599.4px" width="15" height="15" viewBox="0 0 15 15"><path d="M1.2 3.6v8.6a1.4 1.4 0 0 0 1.4 1.4h8.6" fill="none" stroke="#7289c6" stroke-width="1.4"/><rect x="3.4" y="0.8" width="10.8" height="10.8" rx="1.4" fill="#3152a3"/><path d="M8.8 3.3v5.8M5.9 6.2h5.8" stroke="#fff" stroke-width="1.7"/></svg>
<div class="t" style="top:600.2px;font-size:12px;line-height:14.4px;color:#3152a3;font-weight:bold;left:1165px;">Make...</div>
<svg class="abs" style="left:1141.5px;top:639.3px" width="15" height="15" viewBox="0 0 15 15"><path d="M1.2 3.6v8.6a1.4 1.4 0 0 0 1.4 1.4h8.6" fill="none" stroke="#7289c6" stroke-width="1.4"/><rect x="3.4" y="0.8" width="10.8" height="10.8" rx="1.4" fill="#3152a3"/><path d="M8.8 3.3v5.8M5.9 6.2h5.8" stroke="#fff" stroke-width="1.7"/></svg>
<div class="t" style="top:640.1px;font-size:12px;line-height:14.4px;color:#3152a3;font-weight:bold;left:1165px;">Make...</div>
<svg class="abs" style="left:1141.5px;top:679.1px" width="15" height="15" viewBox="0 0 15 15"><path d="M1.2 3.6v8.6a1.4 1.4 0 0 0 1.4 1.4h8.6" fill="none" stroke="#7289c6" stroke-width="1.4"/><rect x="3.4" y="0.8" width="10.8" height="10.8" rx="1.4" fill="#3152a3"/><path d="M8.8 3.3v5.8M5.9 6.2h5.8" stroke="#fff" stroke-width="1.7"/></svg>
<div class="t" style="top:679.9px;font-size:12px;line-height:14.4px;color:#3152a3;font-weight:bold;left:1165px;">Make...</div>
<svg class="abs" style="left:1141.5px;top:719.0px" width="15" height="15" viewBox="0 0 15 15"><path d="M1.2 3.6v8.6a1.4 1.4 0 0 0 1.4 1.4h8.6" fill="none" stroke="#7289c6" stroke-width="1.4"/><rect x="3.4" y="0.8" width="10.8" height="10.8" rx="1.4" fill="#3152a3"/><path d="M8.8 3.3v5.8M5.9 6.2h5.8" stroke="#fff" stroke-width="1.7"/></svg>
<div class="t" style="top:719.8px;font-size:12px;line-height:14.4px;color:#3152a3;font-weight:bold;left:1165px;">Make...</div>
<div class="abs" style="left:1246.8px;top:348.30px;width:142.4000000000001px;height:37px;background:#fff;border:1.5px solid #5570ad;"></div>
<div class="abs" style="left:1246.8px;top:388.15px;width:142.4000000000001px;height:37px;background:#fbdf80;"></div>
<div class="t" style="top:400.5px;font-size:12.8px;line-height:15.4px;color:#222;left:1117.6px;width:400px;text-align:center;-webkit-text-stroke:0.25px #222;">Packed</div>
<svg class="abs" style="left:1372px;top:405.7px" width="9" height="5" viewBox="0 0 9 5"><path d="M0 0h9L4.5 5z" fill="#222"/></svg>
<div class="abs" style="left:1246.8px;top:428.00px;width:142.4000000000001px;height:37px;background:#fbdf80;"></div>
<div class="t" style="top:440.3px;font-size:12.8px;line-height:15.4px;color:#222;left:1117.6px;width:400px;text-align:center;-webkit-text-stroke:0.25px #222;">Packed</div>
<svg class="abs" style="left:1372px;top:445.5px" width="9" height="5" viewBox="0 0 9 5"><path d="M0 0h9L4.5 5z" fill="#222"/></svg>
<div class="abs" style="left:1246.8px;top:467.85px;width:142.4000000000001px;height:37px;background:#dddddd;"></div>
<div class="t" style="top:479.8px;font-size:13.4px;line-height:16.1px;color:#222;left:1117.8px;width:400px;text-align:center;-webkit-text-stroke:0.25px #222;">Not shipped</div>
<svg class="abs" style="left:1372px;top:485.4px" width="9" height="5" viewBox="0 0 9 5"><path d="M0 0h9L4.5 5z" fill="#222"/></svg>
<div class="abs" style="left:1246.8px;top:507.70px;width:142.4000000000001px;height:37px;background:#dddddd;"></div>
<div class="t" style="top:519.7px;font-size:13.4px;line-height:16.1px;color:#222;left:1117.8px;width:400px;text-align:center;-webkit-text-stroke:0.25px #222;">Not shipped</div>
<svg class="abs" style="left:1372px;top:525.2px" width="9" height="5" viewBox="0 0 9 5"><path d="M0 0h9L4.5 5z" fill="#222"/></svg>
<div class="abs" style="left:1246.8px;top:547.55px;width:142.4000000000001px;height:37px;background:#dddddd;"></div>
<div class="t" style="top:559.5px;font-size:13.4px;line-height:16.1px;color:#222;left:1117.8px;width:400px;text-align:center;-webkit-text-stroke:0.25px #222;">Not shipped</div>
<svg class="abs" style="left:1372px;top:565.1px" width="9" height="5" viewBox="0 0 9 5"><path d="M0 0h9L4.5 5z" fill="#222"/></svg>
<div class="abs" style="left:1246.8px;top:587.40px;width:142.4000000000001px;height:37px;background:#dddddd;"></div>
<div class="t" style="top:599.4px;font-size:13.4px;line-height:16.1px;color:#222;left:1117.8px;width:400px;text-align:center;-webkit-text-stroke:0.25px #222;">Not shipped</div>
<svg class="abs" style="left:1372px;top:604.9px" width="9" height="5" viewBox="0 0 9 5"><path d="M0 0h9L4.5 5z" fill="#222"/></svg>
<div class="abs" style="left:1246.8px;top:627.25px;width:142.4000000000001px;height:37px;background:#dddddd;"></div>
<div class="t" style="top:639.2px;font-size:13.4px;line-height:16.1px;color:#222;left:1117.8px;width:400px;text-align:center;-webkit-text-stroke:0.25px #222;">Not shipped</div>
<svg class="abs" style="left:1372px;top:644.8px" width="9" height="5" viewBox="0 0 9 5"><path d="M0 0h9L4.5 5z" fill="#222"/></svg>
<div class="abs" style="left:1246.8px;top:667.10px;width:142.4000000000001px;height:37px;background:#dddddd;"></div>
<div class="t" style="top:679.1px;font-size:13.4px;line-height:16.1px;color:#222;left:1117.8px;width:400px;text-align:center;-webkit-text-stroke:0.25px #222;">Not shipped</div>
<svg class="abs" style="left:1372px;top:684.6px" width="9" height="5" viewBox="0 0 9 5"><path d="M0 0h9L4.5 5z" fill="#222"/></svg>
<div class="abs" style="left:1246.8px;top:706.95px;width:142.4000000000001px;height:37px;background:#dddddd;"></div>
<div class="t" style="top:718.9px;font-size:13.4px;line-height:16.1px;color:#222;left:1117.8px;width:400px;text-align:center;-webkit-text-stroke:0.25px #222;">Not shipped</div>
<svg class="abs" style="left:1372px;top:724.5px" width="9" height="5" viewBox="0 0 9 5"><path d="M0 0h9L4.5 5z" fill="#222"/></svg>
<div class="abs" style="left:1253px;top:306px;width:137px;height:122.5px;background:#fff;border-radius:2px;box-shadow:0 2px 6px rgba(0,0,0,.28),0 0 2px rgba(0,0,0,.15)"></div>
<div class="abs" style="left:1253px;top:349.3px;width:137px;height:36px;background:#ebebeb"></div>
<div class="abs" style="left:1253px;top:385.3px;width:137px;height:35.5px;background:#ccd6e9"></div>
<div class="abs" style="left:1273px;top:326.3px;width:11px;height:11px;background:#d2d2d2"></div>
<div class="t" style="top:323.8px;font-size:13.4px;line-height:16.1px;color:#444;left:1304px;">Not shipped</div>
<div class="abs" style="left:1273px;top:362.5px;width:11px;height:11px;background:#fbdf80"></div>
<div class="t" style="top:360.0px;font-size:13.4px;line-height:16.1px;color:#444;left:1304px;">Packed</div>
<div class="abs" style="left:1273px;top:398.5px;width:11px;height:11px;background:#48815a"></div>
<div class="t" style="top:396.0px;font-size:13.4px;line-height:16.1px;color:#444;left:1304px;">Delivered</div>
<div class="abs" style="left:810.5px;top:334.0px;width:303.0px;height:303.0px;border-radius:50%;box-shadow:-8px 5px 22px rgba(0,0,0,.55), 0 1px 13px rgba(0,0,0,.34)"></div>
<div class="abs" id="mag" style="left:810.5px;top:334.0px;width:303.0px;height:303.0px;border-radius:50%;overflow:hidden;background:#fff">
<div class="abs" style="left:-810.5px;top:-334.0px;width:1480px;height:987px">
<div class="abs" style="left:780px;top:330.6px;width:176.29999999999995px;height:45.69999999999999px;background:#48815a"></div>
<div class="abs" style="left:956.3px;top:330.6px;width:173.70000000000005px;height:45.69999999999999px;background:#48815a"></div>
<div class="abs" style="left:780px;top:376.3px;width:176.29999999999995px;height:45.19999999999999px;background:#48815a"></div>
<div class="abs" style="left:956.3px;top:376.3px;width:173.70000000000005px;height:45.19999999999999px;background:#48815a"></div>
<div class="abs" style="left:780px;top:421.5px;width:176.29999999999995px;height:46.39999999999998px;background:#fbdf80"></div>
<div class="abs" style="left:956.3px;top:421.5px;width:173.70000000000005px;height:46.39999999999998px;background:#fbdf80"></div>
<div class="abs" style="left:780px;top:467.9px;width:176.29999999999995px;height:46.60000000000002px;background:#fbdf80"></div>
<div class="abs" style="left:956.3px;top:467.9px;width:173.70000000000005px;height:46.60000000000002px;background:#fbdf80"></div>
<div class="abs" style="left:780px;top:514.5px;width:176.29999999999995px;height:45.10000000000002px;background:#d63b21"></div>
<div class="abs" style="left:956.3px;top:514.5px;width:173.70000000000005px;height:45.10000000000002px;background:#fbdf80"></div>
<div class="abs" style="left:780px;top:559.6px;width:176.29999999999995px;height:45.39999999999998px;background:#d63b21"></div>
<div class="abs" style="left:956.3px;top:559.6px;width:173.70000000000005px;height:45.39999999999998px;background:#d63b21"></div>
<div class="abs" style="left:780px;top:605.0px;width:176.29999999999995px;height:46.0px;background:#d63b21"></div>
<div class="abs" style="left:956.3px;top:605.0px;width:173.70000000000005px;height:46.0px;background:#fbdf80"></div>
<div class="abs" style="left:780px;top:375.1px;width:350px;height:2.4px;background:#e9f1ea"></div>
<div class="abs" style="left:780px;top:420.3px;width:350px;height:2.4px;background:#f4efd0"></div>
<div class="abs" style="left:780px;top:466.7px;width:350px;height:2.4px;background:#fdf1c4"></div>
<div class="abs" style="left:780px;top:513.3px;width:350px;height:2.4px;background:#fbeed0"></div>
<div class="abs" style="left:780px;top:558.4px;width:350px;height:2.4px;background:#f7e6d8"></div>
<div class="abs" style="left:780px;top:603.8px;width:350px;height:2.4px;background:#f5dfd8"></div>
<div class="abs" style="left:955.0999999999999px;top:320px;width:2.4px;height:340px;background:#edf1e6"></div>
<div class="t" style="top:348.5px;font-size:14.6px;line-height:17.5px;color:#fff;left:673.6px;width:400px;text-align:center;-webkit-text-stroke:0.35px #fff;">Picked</div>
<div class="t" style="top:348.5px;font-size:14.6px;line-height:17.5px;color:#fff;left:839.5999999999999px;width:400px;text-align:center;-webkit-text-stroke:0.35px #fff;">Processed</div>
<div class="t" style="top:392.7px;font-size:14.6px;line-height:17.5px;color:#fff;left:673.6px;width:400px;text-align:center;-webkit-text-stroke:0.35px #fff;">Picked</div>
<div class="t" style="top:392.7px;font-size:14.6px;line-height:17.5px;color:#fff;left:839.5999999999999px;width:400px;text-align:center;-webkit-text-stroke:0.35px #fff;">Processed</div>
<div class="t" style="top:426.8px;font-size:14.6px;line-height:17.5px;color:#2b2b2b;left:673.6px;width:400px;text-align:center;-webkit-text-stroke:0.35px #2b2b2b;">Expected</div>
<div class="t" style="top:445.8px;font-size:14.6px;line-height:17.5px;color:#111;font-weight:bold;left:673.6px;width:400px;text-align:center;">2021-06-03</div>
<div class="t" style="top:472.6px;font-size:14.6px;line-height:17.5px;color:#2b2b2b;left:673.6px;width:400px;text-align:center;-webkit-text-stroke:0.35px #2b2b2b;">Expected</div>
<div class="t" style="top:491.6px;font-size:14.6px;line-height:17.5px;color:#111;font-weight:bold;left:673.6px;width:400px;text-align:center;">2021-06-03</div>
<div class="t" style="top:426.8px;font-size:14.6px;line-height:17.5px;color:#2b2b2b;left:839.5999999999999px;width:400px;text-align:center;-webkit-text-stroke:0.35px #2b2b2b;">Expected</div>
<div class="t" style="top:445.8px;font-size:14.6px;line-height:17.5px;color:#111;font-weight:bold;left:839.5999999999999px;width:400px;text-align:center;">2021-06-17</div>
<div class="t" style="top:472.6px;font-size:14.6px;line-height:17.5px;color:#2b2b2b;left:839.5999999999999px;width:400px;text-align:center;-webkit-text-stroke:0.35px #2b2b2b;">Expected</div>
<div class="t" style="top:491.6px;font-size:14.6px;line-height:17.5px;color:#111;font-weight:bold;left:839.5999999999999px;width:400px;text-align:center;">2021-06-17</div>
<div class="t" style="top:517.6px;font-size:14.6px;line-height:17.5px;color:#2b2b2b;left:839.5999999999999px;width:400px;text-align:center;-webkit-text-stroke:0.35px #2b2b2b;">Expected</div>
<div class="t" style="top:536.6px;font-size:14.6px;line-height:17.5px;color:#111;font-weight:bold;left:839.5999999999999px;width:400px;text-align:center;">2021-06-17</div>
<div class="t" style="top:530.2px;font-size:14.6px;line-height:17.5px;color:#fff;left:673.6px;width:400px;text-align:center;-webkit-text-stroke:0.35px #fff;">Not available</div>
<div class="t" style="top:575.5px;font-size:14.6px;line-height:17.5px;color:#fff;left:673.6px;width:400px;text-align:center;-webkit-text-stroke:0.35px #fff;">Not available</div>
<div class="t" style="top:575.5px;font-size:14.6px;line-height:17.5px;color:#fff;left:839.5999999999999px;width:400px;text-align:center;-webkit-text-stroke:0.35px #fff;">Not available</div>
<div class="t" style="top:608.8px;font-size:14.6px;line-height:17.5px;color:#2b2b2b;left:839.5999999999999px;width:400px;text-align:center;-webkit-text-stroke:0.35px #2b2b2b;">Expected</div>
<div class="t" style="top:620.2px;font-size:14.6px;line-height:17.5px;color:#fff;left:673.6px;width:400px;text-align:center;-webkit-text-stroke:0.35px #fff;">Not available</div>
</div></div>
</div><div class="abs" id="soft" style="left:0;top:0;width:1389px;height:833px;backdrop-filter:blur(0.8px);opacity:.6;pointer-events:none"></div></div>
</body></html>
